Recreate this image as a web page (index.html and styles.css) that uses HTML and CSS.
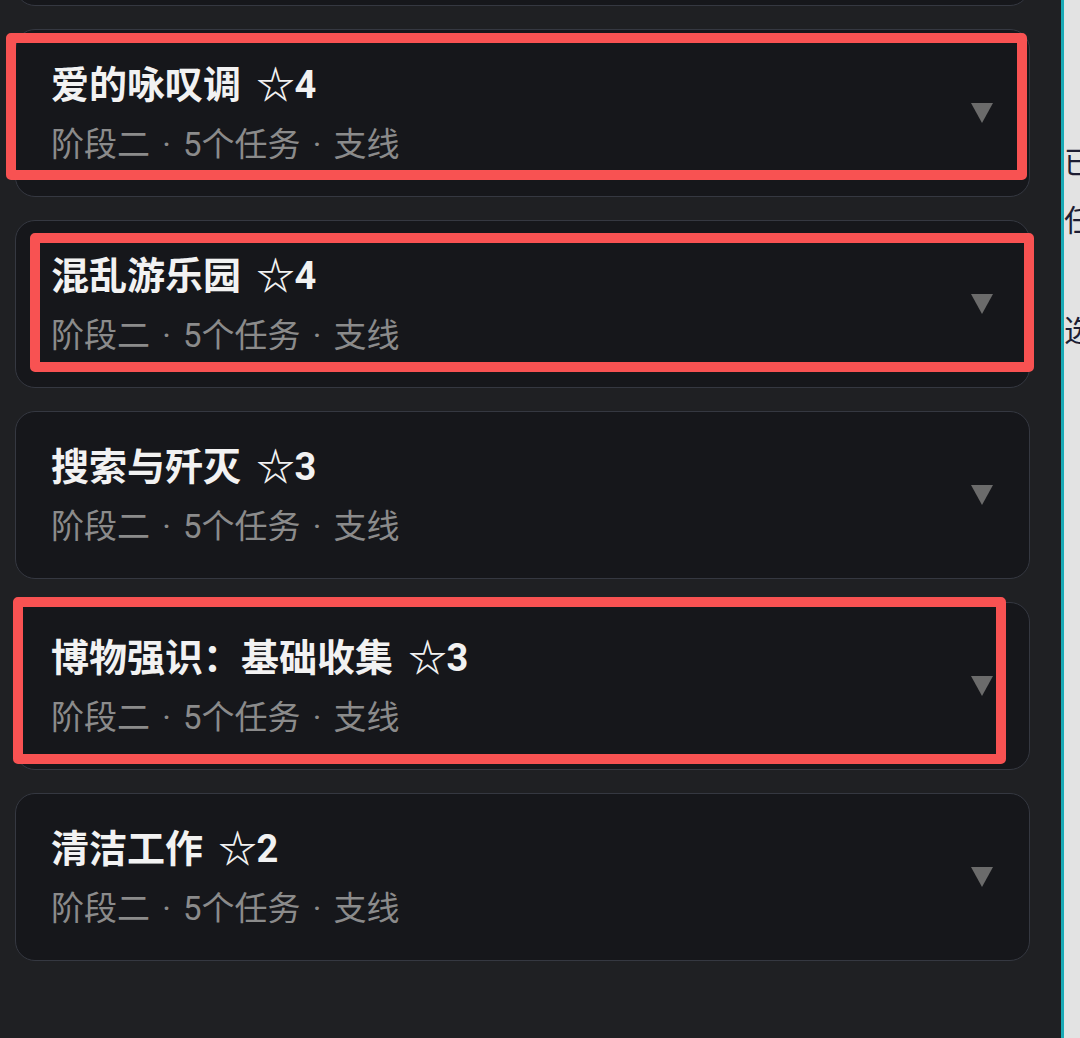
FILE: index.html
```html
<!DOCTYPE html>
<html lang="zh-CN">
<head>
    <meta charset="UTF-8">
    <meta name="viewport" content="width=device-width, initial-scale=1.0">
    <title>任务列表</title>
    <link rel="stylesheet" href="styles.css">
</head>
<body>
    <div class="layout">
        <div class="quest-panel">
            <div class="quest-list">
                <div class="quest-card">
                    <div class="quest-info">
                        <div class="quest-title">温暖的回忆 ☆4</div>
                        <div class="quest-meta">阶段二 · 5个任务 · 支线</div>
                    </div>
                    <svg class="quest-arrow" viewBox="0 0 22 20"><polygon points="0,0 22,0 11,20"/></svg>
                </div>

                <div class="quest-card">
                    <div class="quest-info">
                        <div class="quest-title">爱的咏叹调 ☆4</div>
                        <div class="quest-meta">阶段二 · 5个任务 · 支线</div>
                    </div>
                    <svg class="quest-arrow" viewBox="0 0 22 20"><polygon points="0,0 22,0 11,20"/></svg>
                    <div class="mark mark-1"></div>
                </div>

                <div class="quest-card">
                    <div class="quest-info">
                        <div class="quest-title">混乱游乐园 ☆4</div>
                        <div class="quest-meta">阶段二 · 5个任务 · 支线</div>
                    </div>
                    <svg class="quest-arrow" viewBox="0 0 22 20"><polygon points="0,0 22,0 11,20"/></svg>
                    <div class="mark mark-2"></div>
                </div>

                <div class="quest-card">
                    <div class="quest-info">
                        <div class="quest-title">搜索与歼灭 ☆3</div>
                        <div class="quest-meta">阶段二 · 5个任务 · 支线</div>
                    </div>
                    <svg class="quest-arrow" viewBox="0 0 22 20"><polygon points="0,0 22,0 11,20"/></svg>
                </div>

                <div class="quest-card">
                    <div class="quest-info">
                        <div class="quest-title">博物强识：基础收集 ☆3</div>
                        <div class="quest-meta">阶段二 · 5个任务 · 支线</div>
                    </div>
                    <svg class="quest-arrow" viewBox="0 0 22 20"><polygon points="0,0 22,0 11,20"/></svg>
                    <div class="mark mark-3"></div>
                </div>

                <div class="quest-card">
                    <div class="quest-info">
                        <div class="quest-title">清洁工作 ☆2</div>
                        <div class="quest-meta">阶段二 · 5个任务 · 支线</div>
                    </div>
                    <svg class="quest-arrow" viewBox="0 0 22 20"><polygon points="0,0 22,0 11,20"/></svg>
                </div>
            </div>
        </div>

        <div class="divider"></div>

        <div class="side-pane">
            <p class="side-line line-1">已完成任务</p>
            <p class="side-line line-2">任务详情</p>
            <p class="side-line line-3">选择任务</p>
        </div>
    </div>
</body>
</html>
```

FILE: styles.css
```css
body {
    margin: 0;
    padding: 0;
    background-color: #1f2023;
    font-family: Roboto, "Noto Sans CJK SC", sans-serif;
    overflow: hidden;
}

.layout {
    display: flex;
    height: 1038px;
}

.quest-panel {
    width: 1061px;
    flex-shrink: 0;
    background-color: #1f2023;
    overflow: hidden;
}

.quest-list {
    display: flex;
    flex-direction: column;
    gap: 23px;
    padding: 0 31px 0 15px;
    margin-top: -162px;
}

.quest-card {
    position: relative;
    display: flex;
    align-items: center;
    justify-content: space-between;
    height: 168px;
    box-sizing: border-box;
    padding: 0 36px 0 35px;
    background-color: #16171b;
    border: 1px solid #353841;
    border-radius: 20px;
}

.quest-info {
    display: flex;
    flex-direction: column;
    gap: 14px;
    margin-top: 2px;
}

.quest-title {
    color: #f2f2f2;
    font-size: 38px;
    font-weight: bold;
    line-height: 48px;
    word-spacing: 6px;
}

.quest-meta {
    color: #8b8b8b;
    font-size: 33px;
    line-height: 44px;
    word-spacing: 4px;
}

.quest-arrow {
    width: 22px;
    height: 20px;
    fill: #6b6b6b;
}

/* red annotation boxes */
.mark {
    position: absolute;
    border: 10px solid #f85252;
    border-radius: 5px;
    pointer-events: none;
}

.mark-1 {
    left: -10px;
    top: 3px;
    right: 2px;
    bottom: 16px;
}

.mark-2 {
    left: 14px;
    top: 12px;
    right: -5px;
    bottom: 15px;
}

.mark-3 {
    left: -3px;
    top: -6px;
    right: 23px;
    bottom: 5px;
}

.divider {
    width: 3px;
    flex-shrink: 0;
    background-color: #18aab6;
}

.side-pane {
    flex: 1;
    overflow: hidden;
    background-color: #e3e3e3;
    white-space: nowrap;
    padding-top: 143px;
}

.side-line {
    margin: 0;
    color: #1d1d33;
    font-size: 30px;
    line-height: 40px;
}

.line-2 {
    margin-top: 18px;
}

.line-3 {
    margin-top: 70px;
}
```
